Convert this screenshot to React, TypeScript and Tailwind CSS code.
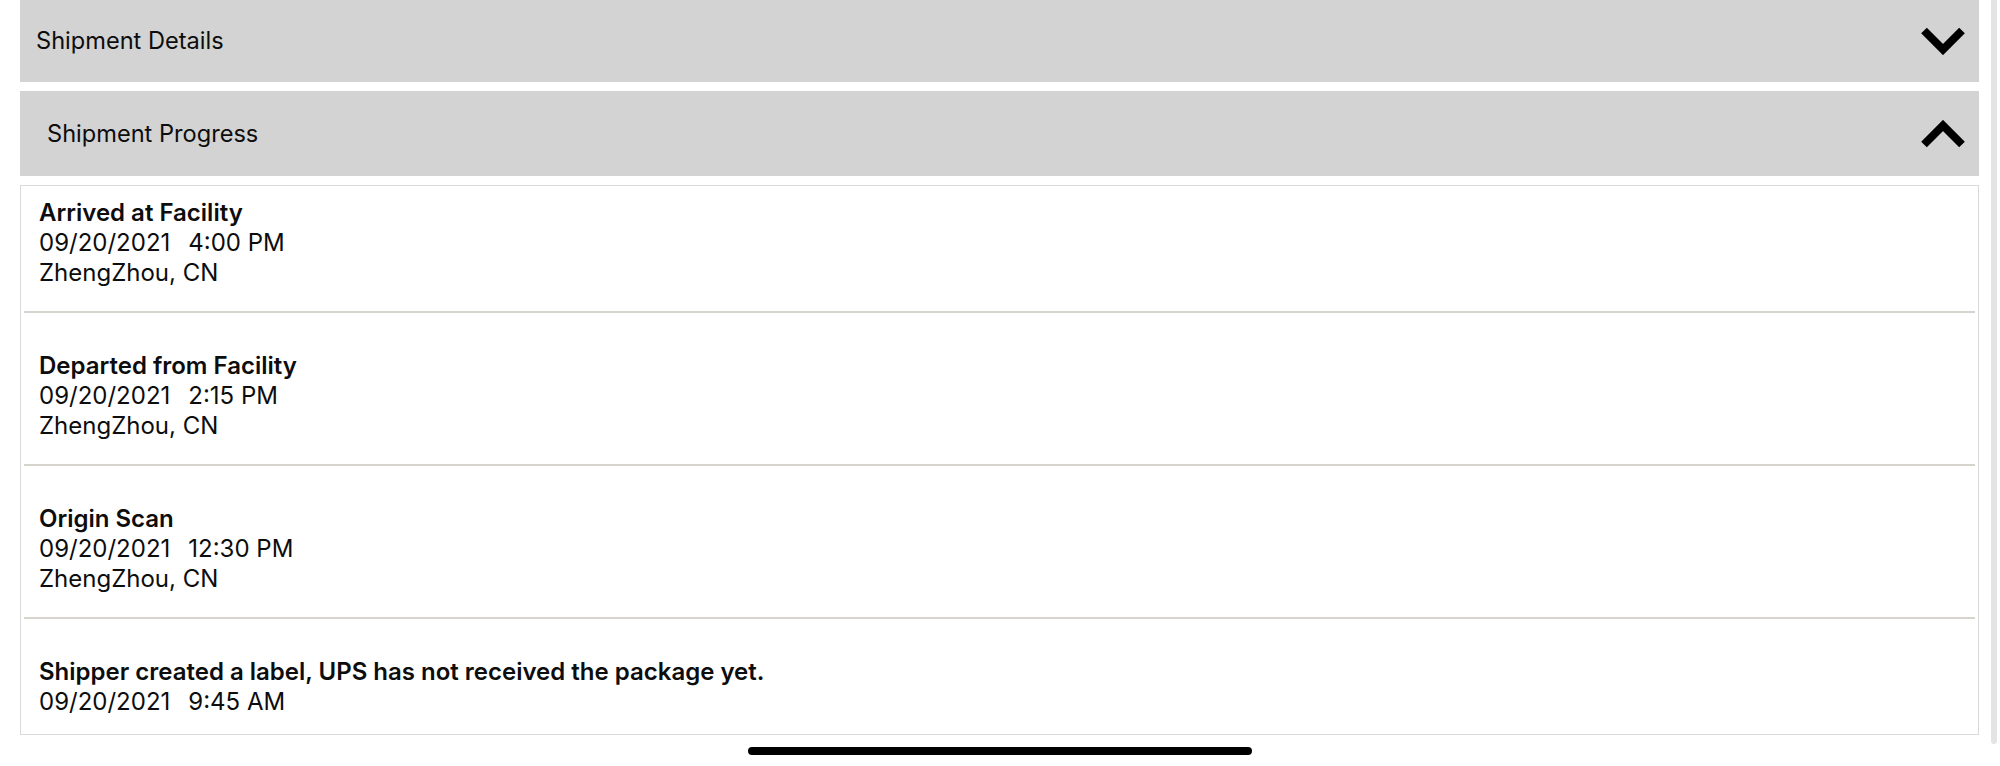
import React from "react";

interface ProgressEvent {
  status: string;
  date: string;
  time: string;
  location?: string;
}

const events: ProgressEvent[] = [
  { status: "Arrived at Facility", date: "09/20/2021", time: "4:00 PM", location: "ZhengZhou, CN" },
  { status: "Departed from Facility", date: "09/20/2021", time: "2:15 PM", location: "ZhengZhou, CN" },
  { status: "Origin Scan", date: "09/20/2021", time: "12:30 PM", location: "ZhengZhou, CN" },
  { status: "Shipper created a label, UPS has not received the package yet.", date: "09/20/2021", time: "9:45 AM" },
];

function Chevron({ up }: { up?: boolean }) {
  return (
    <svg width="46" height="28" viewBox="0 0 46 28" className="block">
      <polyline
        points={up ? "4,24.5 23,5.5 42,24.5" : "4,3.5 23,22.5 42,3.5"}
        fill="none"
        stroke="#000"
        strokeWidth="8"
        strokeLinecap="butt"
        strokeLinejoin="miter"
      />
    </svg>
  );
}

export default function App() {
  return (
    <div className="flex w-[2000px] h-[766px] bg-white text-[#0d0d0d] font-['Inter','Liberation_Sans',sans-serif] overflow-hidden">
      {/* Main column */}
      <div className="flex flex-col w-[1959px] ml-[20px]">
        {/* Shipment Details header */}
        <div className="flex items-center justify-between h-[82px] bg-[#d3d3d3] pl-[16px] pr-[13px]">
          <span className="text-[23.6px] leading-none">Shipment Details</span>
          <Chevron />
        </div>

        {/* Shipment Progress header */}
        <div className="flex items-center justify-between h-[85px] mt-[9px] bg-[#d3d3d3] pl-[27px] pr-[13px]">
          <span className="text-[23.6px] leading-none">Shipment Progress</span>
          <Chevron up />
        </div>

        {/* Progress list */}
        <div className="mt-[9px] border border-[#dadada] px-[3px]">
          {events.map((ev, i) => (
            <div
              key={i}
              className={`pl-[15px] text-[24px] leading-[30px] ${
                i === 0 ? "pt-[12px] pb-[23px]" : "pt-[38px]"
              } ${
                i < events.length - 1
                  ? "border-b-2 border-[#d6d4cc]"
                  : "pb-[17px]"
              } ${i > 0 && i < events.length - 1 ? "pb-[23px]" : ""}`}
            >
              <div className="font-semibold">{ev.status}</div>
              <div>
                {ev.date}
                <span className="ml-[18px]">{ev.time}</span>
              </div>
              {ev.location && <div>{ev.location}</div>}
            </div>
          ))}
        </div>

        {/* Home indicator */}
        <div className="mt-[12px] mx-auto w-[504px] h-[8px] rounded-full bg-black" />
      </div>

      {/* Scroll track */}
      <div className="ml-[12px] w-[6px] h-[744px] rounded-b-full bg-[#e4e4e4]" />
    </div>
  );
}
